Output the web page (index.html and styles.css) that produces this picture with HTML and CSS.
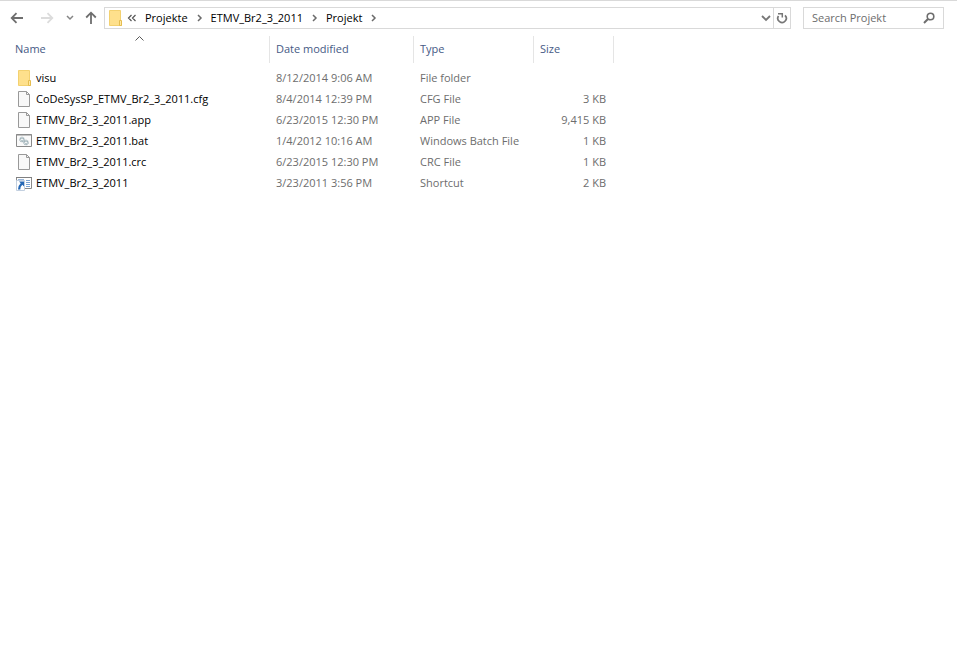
FILE: index.html
```html
<!DOCTYPE html>
<html lang="en">
<head>
    <meta charset="UTF-8">
    <meta name="viewport" content="width=device-width, initial-scale=1.0">
    <title>Projekt</title>
    <link rel="stylesheet" href="styles.css">
</head>
<body>

    <!-- shared icons -->
    <svg class="icon-defs" aria-hidden="true">
        <symbol id="icon-folder" viewBox="0 0 16 16">
            <path d="M2.500 0.500h11v10l1 1v4h-12z" fill="#fee08c" stroke="#f3d170"/>
            <path d="M12.500 10.500h2v5h-2z" fill="#ffe9a6" stroke="#e5bd50"/>
        </symbol>
        <symbol id="icon-file" viewBox="0 0 16 16">
            <path d="M2.500 0.500h8l3 3v12h-11z" fill="#f8f8f8" stroke="#999"/>
            <path d="M10.500 0.500v3h3" fill="none" stroke="#999"/>
        </symbol>
        <symbol id="icon-batch" viewBox="0 0 16 16">
            <path d="M0.500 1.500h15v12H0.500z" fill="#fafafa" stroke="#8a8a8a"/>
            <path d="M0 2h16" stroke="#8a8a8a"/>
            <circle cx="6" cy="6.500" r="2" fill="none" stroke="#8fa5ad" stroke-width="1.500" stroke-dasharray="1 0.600"/>
            <circle cx="6" cy="6.500" r="1.300" fill="#fff" stroke="#a5b8be" stroke-width="0.800"/>
            <circle cx="10" cy="9.500" r="2" fill="none" stroke="#8fa5ad" stroke-width="1.500" stroke-dasharray="1 0.600"/>
            <circle cx="10" cy="9.500" r="1.300" fill="#fff" stroke="#a5b8be" stroke-width="0.800"/>
        </symbol>
        <symbol id="icon-shortcut" viewBox="0 0 16 16">
            <path d="M0.500 2.500h15v11H0.500z" fill="#fff" stroke="#8a8a8a"/>
            <path d="M0 2.500h16" stroke="#808080"/>
            <path d="M10 5.500h4M10 7.500h4M10 9.500h4M10 11.500h4" stroke="#7ba3d3"/>
            <path d="M2 4.500h6" stroke="#9ab6d8"/>
            <path d="M0.500 5.500h8v10h-8z" fill="#fff" stroke="#c3d0e0"/>
            <path d="M3 6.500h5v5L6.300 9.800Q4.300 11.500 4.300 14.500H2Q2 10.500 4.700 8.200z" fill="#2467b5"/>
        </symbol>
        <symbol id="icon-chevron" viewBox="0 0 7 8">
            <path d="M2 1l3 3-3 3" fill="none" stroke="#6b6b6b" stroke-width="1.500"/>
        </symbol>
    </svg>

    <header class="toolbar">
        <nav class="history">
            <button type="button" class="nav-button" aria-label="Back">
                <svg width="14" height="12" viewBox="0 0 14 12"><path d="M13 6H2M6.500 1.200L1.700 6l4.800 4.800" fill="none" stroke="#6e6e6e" stroke-width="1.800"/></svg>
            </button>
            <button type="button" class="nav-button" aria-label="Forward" disabled>
                <svg width="14" height="12" viewBox="0 0 14 12"><path d="M1 6h11M7.500 1.200L12.300 6l-4.800 4.800" fill="none" stroke="#dcdcdc" stroke-width="1.800"/></svg>
            </button>
            <button type="button" class="nav-button nav-recent" aria-label="Recent locations">
                <svg width="8" height="6" viewBox="0 0 8 6"><path d="M1 1l3 3 3-3" fill="none" stroke="#858585" stroke-width="1.500"/></svg>
            </button>
            <button type="button" class="nav-button nav-up" aria-label="Up">
                <svg width="12" height="14" viewBox="0 0 12 14"><path d="M6 13V2M1.200 6.500L6 1.700l4.800 4.800" fill="none" stroke="#6e6e6e" stroke-width="1.800"/></svg>
            </button>
        </nav>

        <div class="address">
            <svg class="icon"><use href="#icon-folder"/></svg>
            <nav class="crumbs" aria-label="Path">
                <svg width="10" height="8" viewBox="0 0 10 8"><path d="M4.500 1l-3 3 3 3M8.500 1l-3 3 3 3" fill="none" stroke="#555" stroke-width="1.200"/></svg>
                <a href="#">Projekte</a>
                <svg class="chevron"><use href="#icon-chevron"/></svg>
                <a href="#">ETMV_Br2_3_2011</a>
                <svg class="chevron"><use href="#icon-chevron"/></svg>
                <a href="#">Projekt</a>
                <svg class="chevron"><use href="#icon-chevron"/></svg>
            </nav>
            <button type="button" class="address-button" aria-label="Previous locations">
                <svg width="10" height="8" viewBox="0 0 10 8"><path d="M1 2l4 4 4-4" fill="none" stroke="#777" stroke-width="1.800"/></svg>
            </button>
            <button type="button" class="address-button refresh" aria-label="Refresh">
                <svg width="12" height="12" viewBox="0 0 12 12"><path d="M9 3.300A4.200 4.200 0 1 1 2.500 4" fill="none" stroke="#777" stroke-width="1.700"/><path d="M2 1.700h4.300v3.800" fill="none" stroke="#777" stroke-width="1.500"/></svg>
            </button>
        </div>

        <form class="search" role="search">
            <input type="text" placeholder="Search Projekt" aria-label="Search Projekt">
            <button type="button" aria-label="Search">
                <svg width="12" height="12" viewBox="0 0 12 12"><circle cx="7.500" cy="4.500" r="3.300" fill="none" stroke="#6e6e6e" stroke-width="1.600"/><path d="M5.200 6.800L1 11" stroke="#6e6e6e" stroke-width="2"/></svg>
            </button>
        </form>
    </header>

    <main>
        <table class="files">
            <colgroup>
                <col class="col-name">
                <col class="col-date">
                <col class="col-type">
                <col class="col-size">
            </colgroup>
            <thead>
                <tr>
                    <th class="sorted" aria-sort="ascending">Name
                        <svg class="sort-arrow" width="9" height="5" viewBox="0 0 9 5"><path d="M0.500 4.500l4-4 4 4" fill="none" stroke="#5a5a5a"/></svg>
                    </th>
                    <th>Date modified</th>
                    <th>Type</th>
                    <th>Size</th>
                </tr>
            </thead>
            <tbody>
                <tr>
                    <td><a href="#" class="file"><svg class="icon"><use href="#icon-folder"/></svg>visu</a></td>
                    <td>8/12/2014 9:06 AM</td>
                    <td>File folder</td>
                    <td></td>
                </tr>
                <tr>
                    <td><a href="#" class="file"><svg class="icon"><use href="#icon-file"/></svg>CoDeSysSP_ETMV_Br2_3_2011.cfg</a></td>
                    <td>8/4/2014 12:39 PM</td>
                    <td>CFG File</td>
                    <td>3 KB</td>
                </tr>
                <tr>
                    <td><a href="#" class="file"><svg class="icon"><use href="#icon-file"/></svg>ETMV_Br2_3_2011.app</a></td>
                    <td>6/23/2015 12:30 PM</td>
                    <td>APP File</td>
                    <td>9,415 KB</td>
                </tr>
                <tr>
                    <td><a href="#" class="file"><svg class="icon"><use href="#icon-batch"/></svg>ETMV_Br2_3_2011.bat</a></td>
                    <td>1/4/2012 10:16 AM</td>
                    <td>Windows Batch File</td>
                    <td>1 KB</td>
                </tr>
                <tr>
                    <td><a href="#" class="file"><svg class="icon"><use href="#icon-file"/></svg>ETMV_Br2_3_2011.crc</a></td>
                    <td>6/23/2015 12:30 PM</td>
                    <td>CRC File</td>
                    <td>1 KB</td>
                </tr>
                <tr>
                    <td><a href="#" class="file"><svg class="icon"><use href="#icon-shortcut"/></svg>ETMV_Br2_3_2011</a></td>
                    <td>3/23/2011 3:56 PM</td>
                    <td>Shortcut</td>
                    <td>2 KB</td>
                </tr>
            </tbody>
        </table>
    </main>

</body>
</html>
```
FILE: styles.css
```css
* {
    box-sizing: border-box;
}

body {
    margin: 0;
    background-color: #fff;
    color: #000;
    font-family: "Open Sans", "Noto Sans", sans-serif;
    font-size: 11px;
    line-height: 16px;
}

a {
    color: inherit;
    text-decoration: none;
}

button,
input {
    margin: 0;
    padding: 0;
    border: none;
    background: none;
    font: inherit;
}

svg {
    flex-shrink: 0;
}

.icon-defs {
    display: none;
}

.icon {
    width: 16px;
    height: 16px;
}

.toolbar {
    display: flex;
    border-top: 1px solid #d9d9d9;
    padding: 6px 13px 7px 4px;
}

.history {
    display: flex;
    gap: 4px;
    margin-right: 2px;
}

.nav-button,
.address-button {
    display: flex;
    align-items: center;
    justify-content: center;
    width: 26px;
}

.nav-recent {
    width: 12px;
}

.nav-up {
    width: 22px;
}

.address,
.search {
    display: flex;
    align-items: center;
    height: 22px;
    border: 1px solid #d9d9d9;
}

.address {
    flex: 1;
    min-width: 0;
    padding-left: 2px;
}

.crumbs {
    display: flex;
    flex: 1;
    align-items: center;
    gap: 8px;
    min-width: 0;
    padding-left: 4px;
}

.chevron {
    width: 7px;
    height: 8px;
}

.address-button {
    width: 14px;
    height: 20px;
}

.refresh {
    width: 17px;
    border-left: 1px solid #d9d9d9;
}

.search {
    width: 141px;
    margin-left: 12px;
    padding: 0 8px;
}

.search input {
    flex: 1;
    min-width: 0;
    outline: none;
}

.search input::placeholder {
    color: #6d6d6d;
    opacity: 1;
}

.search button {
    display: flex;
}

.files {
    table-layout: fixed;
    width: 614px;
    border-collapse: separate;
    border-spacing: 0;
}

.col-name {
    width: 270px;
}

.col-date {
    width: 144px;
}

.col-type {
    width: 120px;
}

.col-size {
    width: 80px;
}

.files th {
    height: 27px;
    padding: 0 6px 2px;
    border-right: 1px solid #e5e5e5;
    color: #465a85;
    font-weight: normal;
    text-align: left;
}

.files .sorted {
    position: relative;
    padding-left: 15px;
}

.sort-arrow {
    position: absolute;
    top: 0;
    left: 50%;
}

/* gap between the column headings and the first file */
.files tbody::before {
    content: "";
    display: block;
    height: 4px;
}

.files td {
    height: 21px;
    padding: 0 6px;
    color: #6d6d6d;
    white-space: nowrap;
}

.files td:first-child {
    padding-left: 16px;
    color: #000;
}

.files td:last-child {
    padding-right: 8px;
    text-align: right;
}

.file {
    display: flex;
    align-items: center;
    gap: 4px;
}
```
